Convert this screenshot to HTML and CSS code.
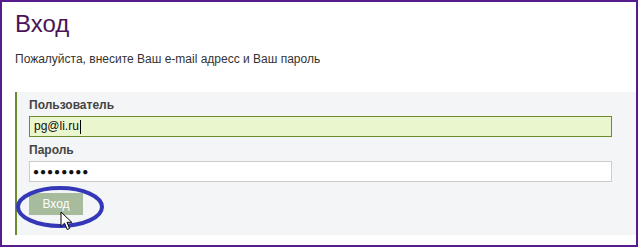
FILE: index.html
```html
<!DOCTYPE html>
<html lang="ru">
<head>
    <meta charset="UTF-8">
    <title>Вход</title>
    <link rel="stylesheet" href="styles.css">
</head>
<body>
    <div class="frame">
        <h1>Вход</h1>
        <p class="hint">Пожалуйста, внесите Ваш e-mail адресс и Ваш пароль</p>
        <div class="login-box">
            <div class="label">Пользователь</div>
            <div class="field active">pg@li.ru<span class="caret"></span></div>
            <div class="label">Пароль</div>
            <div class="field dots">&#9679;&#9679;&#9679;&#9679;&#9679;&#9679;&#9679;&#9679;</div>
            <button class="submit">Вход</button>
        </div>

        <!-- annotation drawn over the button -->
        <svg class="mark" width="96" height="48" viewBox="0 0 96 48">
            <ellipse cx="46" cy="22" rx="42" ry="19" fill="none" stroke="#3438b8" stroke-width="4"/>
        </svg>
        <svg class="cursor" width="14" height="20" viewBox="0 0 14 20">
            <path d="M1 1 L1 15.5 L4.5 12.2 L7.2 18.5 L9.6 17.5 L7 11.3 L11.8 11.3 Z" fill="#fff" stroke="#000" stroke-width="1" stroke-linejoin="round"/>
        </svg>
    </div>
</body>
</html>
```

FILE: styles.css
```css
body {
    margin: 0;
    font-family: 'Liberation Sans', Arial, sans-serif;
    background: #ffffff;
}
.frame {
    position: relative;
    width: 638px;
    height: 247px;
    box-sizing: border-box;
    border: 2px solid #561b8d;
    overflow: hidden;
}
h1 {
    margin: 8px 0 0 13px;
    font-size: 24px;
    line-height: 28px;
    font-weight: normal;
    color: #4b1457;
}
.hint {
    margin: 14px 0 0 13px;
    font-size: 12px;
    line-height: 15px;
    color: #333333;
}
.login-box {
    margin: 25px 0 0 13px;
    padding: 6px 24px 20px 12px;
    background: #f4f5f7;
    border-left: 2px solid #6d8a2c;
    display: flex;
    flex-direction: column;
    align-items: flex-start;
}
.label {
    font-size: 12px;
    line-height: 15px;
    font-weight: bold;
    color: #444444;
    margin-bottom: 3px;
}
.field {
    align-self: stretch;
    height: 21px;
    box-sizing: border-box;
    border: 1px solid #cccccc;
    background: #ffffff;
    padding: 0 4px;
    font-size: 12px;
    line-height: 19px;
    color: #111111;
    margin-bottom: 6px;
    display: flex;
    align-items: center;
}
.field.active {
    background: #eaf6cd;
    border-color: #6d8a2c;
}
.caret {
    display: inline-block;
    width: 1px;
    height: 14px;
    background: #000000;
    margin-left: 1px;
}
.dots {
    font-size: 10px;
    letter-spacing: 1px;
    padding-left: 3px;
}
.submit {
    margin-top: 5px;
    width: 54px;
    height: 22px;
    border: none;
    background: #a6bc9c;
    color: #ffffff;
    font-family: 'Liberation Sans', Arial, sans-serif;
    font-size: 12px;
    padding: 0;
}
.mark {
    position: absolute;
    left: 12px;
    top: 183px;
}
.cursor {
    position: absolute;
    left: 58px;
    top: 209px;
}
```
